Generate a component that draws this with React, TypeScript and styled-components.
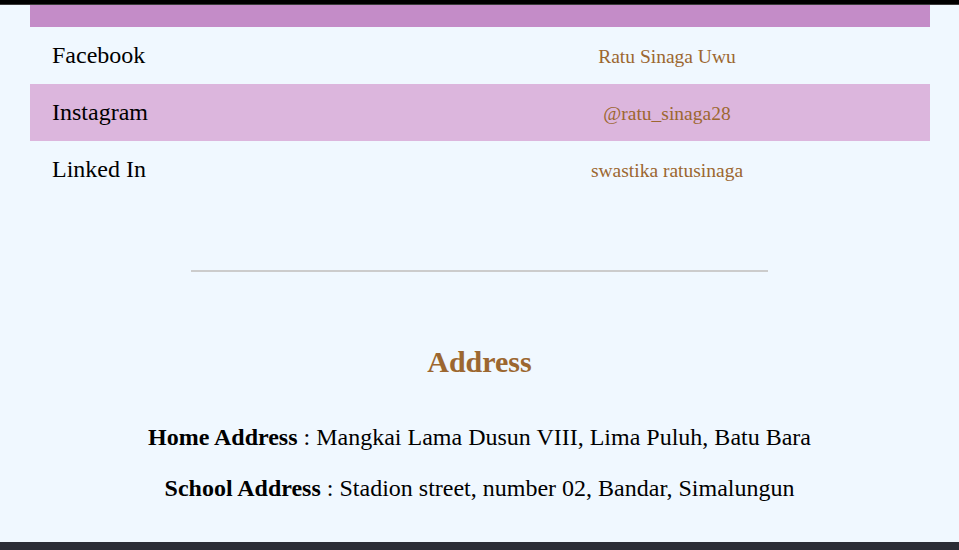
import React from "react";
import styled, { createGlobalStyle } from "styled-components";

const Global = createGlobalStyle`
  html, body {
    margin: 0;
    padding: 0;
    background: #f0f8ff;
    font-family: "Liberation Serif", "Times New Roman", serif;
    color: #000;
  }
`;

const Page = styled.div`
  display: flex;
  flex-direction: column;
  min-height: 550px;
`;

const TopBar = styled.div`
  height: 4px;
  background: #000;
  border-bottom: 1px solid #3a3a3a;
`;

const Table = styled.div`
  margin: 0 29px 0 30px;
  display: flex;
  flex-direction: column;
`;

const HeadRow = styled.div`
  height: 22px;
  background: #c48cc8;
`;

const Row = styled.div<{ $striped?: boolean }>`
  height: 57px;
  box-sizing: border-box;
  padding-top: 15px;
  display: grid;
  grid-template-columns: 374px 1fr;
  align-items: baseline;
  background: ${(p) => (p.$striped ? "#dcb6dd" : "transparent")};
`;

const NameCell = styled.div`
  padding-left: 22px;
  font-size: 24px;
  color: #000;
`;

const ValueCell = styled.div`
  text-align: center;
  font-size: 19.5px;
  color: #9c6730;
`;

const Divider = styled.hr`
  width: 577px;
  height: 2px;
  border: none;
  background: #cccccc;
  margin: 72px auto 0;
`;

const AddressSection = styled.section`
  display: flex;
  flex-direction: column;
  align-items: center;
  padding-top: 73px;
`;

const Heading = styled.h2`
  margin: 0 0 45px;
  font-size: 30px;
  font-weight: bold;
  color: #9c6730;
`;

const Line = styled.p`
  margin: 0 0 24px;
  font-size: 24px;
  text-align: center;
  &:last-child {
    margin-bottom: 0;
  }
`;

const Label = styled.b`
  font-weight: bold;
`;

const Spacer = styled.div`
  flex: 1;
`;

const Footer = styled.footer`
  height: 8px;
  background: #2b2d36;
`;

const socials = [
  { name: "Facebook", value: "Ratu Sinaga Uwu" },
  { name: "Instagram", value: "@ratu_sinaga28" },
  { name: "Linked In", value: "swastika ratusinaga" },
];

export default function App() {
  return (
    <>
      <Global />
      <Page>
        <TopBar />
        <Table>
          <HeadRow />
          {socials.map((s, i) => (
            <Row key={s.name} $striped={i % 2 === 1}>
              <NameCell>{s.name}</NameCell>
              <ValueCell>{s.value}</ValueCell>
            </Row>
          ))}
        </Table>
        <Divider />
        <AddressSection>
          <Heading>Address</Heading>
          <Line>
            <Label>Home Address</Label> : Mangkai Lama Dusun VIII, Lima Puluh, Batu Bara
          </Line>
          <Line>
            <Label>School Address</Label> : Stadion street, number 02, Bandar, Simalungun
          </Line>
        </AddressSection>
        <Spacer />
        <Footer />
      </Page>
    </>
  );
}
